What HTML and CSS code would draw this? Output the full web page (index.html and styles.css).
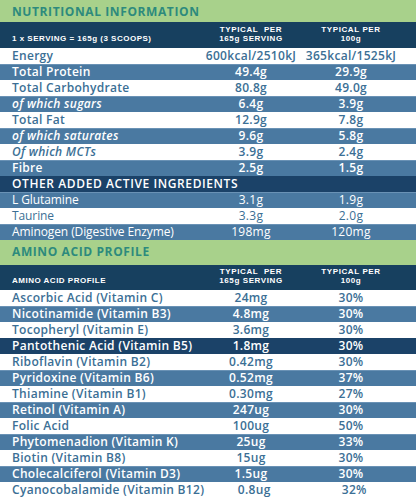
FILE: index.html
```html
<!DOCTYPE html>
<html>
<head>
<meta charset="utf-8">
<link rel="stylesheet" href="styles.css">
</head>
<body>
<div class="sheet">
  <div class="title">NUTRITIONAL INFORMATION</div>
  <div class="row head">
    <span class="lab">1 x SERVING = 165g (3 SCOOPS)</span>
    <span class="val">TYPICAL&nbsp; PER<br>165g SERVING</span>
    <span class="val">TYPICAL PER<br>100g</span>
  </div>
  <div class="row w"><span class="lab">Energy</span><span class="val">600kcal/2510kJ</span><span class="val">365kcal/1525kJ</span></div>
  <div class="row b"><span class="lab">Total Protein</span><span class="val">49.4g</span><span class="val">29.9g</span></div>
  <div class="row w"><span class="lab">Total Carbohydrate</span><span class="val">80.8g</span><span class="val">49.0g</span></div>
  <div class="row b"><span class="lab it">of which sugars</span><span class="val">6.4g</span><span class="val">3.9g</span></div>
  <div class="row w"><span class="lab">Total Fat</span><span class="val">12.9g</span><span class="val">7.8g</span></div>
  <div class="row b"><span class="lab it">of which saturates</span><span class="val">9.6g</span><span class="val">5.8g</span></div>
  <div class="row w"><span class="lab it">Of which MCTs</span><span class="val">3.9g</span><span class="val">2.4g</span></div>
  <div class="row b"><span class="lab">Fibre</span><span class="val">2.5g</span><span class="val">1.5g</span></div>
  <div class="row n"><span class="lab caps">OTHER ADDED ACTIVE INGREDIENTS</span></div>
  <div class="row b light"><span class="lab">L Glutamine</span><span class="val">3.1g</span><span class="val">1.9g</span></div>
  <div class="row w light"><span class="lab">Taurine</span><span class="val">3.3g</span><span class="val">2.0g</span></div>
  <div class="row b light"><span class="lab">Aminogen (Digestive Enzyme)</span><span class="val">198mg</span><span class="val">120mg</span></div>

  <div class="title t2">AMINO ACID PROFILE</div>
  <div class="row head h2">
    <span class="lab">AMINO ACID PROFILE</span>
    <span class="val">TYPICAL&nbsp; PER<br>165g SERVING</span>
    <span class="val">TYPICAL PER<br>100g</span>
  </div>
  <div class="row w am"><span class="lab">Ascorbic Acid (Vitamin C)</span><span class="val">24mg</span><span class="val">30%</span></div>
  <div class="row b am"><span class="lab">Nicotinamide (Vitamin B3)</span><span class="val">4.8mg</span><span class="val">30%</span></div>
  <div class="row w am"><span class="lab">Tocopheryl (Vitamin E)</span><span class="val">3.6mg</span><span class="val">30%</span></div>
  <div class="row n am"><span class="lab">Pantothenic Acid (Vitamin B5)</span><span class="val">1.8mg</span><span class="val">30%</span></div>
  <div class="row w am"><span class="lab">Riboflavin (Vitamin B2)</span><span class="val">0.42mg</span><span class="val">30%</span></div>
  <div class="row b am"><span class="lab">Pyridoxine (Vitamin B6)</span><span class="val">0.52mg</span><span class="val">37%</span></div>
  <div class="row w am"><span class="lab">Thiamine (Vitamin B1)</span><span class="val">0.30mg</span><span class="val">27%</span></div>
  <div class="row b am"><span class="lab">Retinol (Vitamin A)</span><span class="val">247ug</span><span class="val">30%</span></div>
  <div class="row w am"><span class="lab">Folic Acid</span><span class="val">100ug</span><span class="val">50%</span></div>
  <div class="row b am"><span class="lab">Phytomenadion (Vitamin K)</span><span class="val">25ug</span><span class="val">33%</span></div>
  <div class="row w am"><span class="lab">Biotin (Vitamin B8)</span><span class="val">15ug</span><span class="val">30%</span></div>
  <div class="row b am"><span class="lab">Cholecalciferol (Vitamin D3)</span><span class="val">1.5ug</span><span class="val">30%</span></div>
  <div class="row w am"><span class="lab">Cyanocobalamide (Vitamin B12)</span><span class="val">0.8ug</span><span class="val">32%</span></div>
</div>
</body>
</html>
```
FILE: styles.css
```css
html, body {
  margin: 0;
  padding: 0;
  background: #ffffff;
}
.sheet {
  width: 416px;
  font-family: "Open Sans", "DejaVu Sans", sans-serif;
  font-weight: 600;
  font-size: 12px;
  letter-spacing: 0.3px;
}
.title {
  height: 22px;
  background: #a8d18b;
  color: #2d8a7d;
  font-weight: 700;
  font-size: 12px;
  line-height: 12px;
  letter-spacing: 0.6px;
  padding: 0 12px 4px;
  display: flex;
  align-items: flex-end;
  box-sizing: border-box;
}
.title.t2 {
  height: 25px;
  padding-bottom: 7px;
}
.row {
  display: grid;
  grid-template-columns: 1fr 100px 100px;
  padding: 0 15px 0 12px;
  height: 16px;
  line-height: 16px;
  align-items: center;
  white-space: nowrap;
}
.val {
  text-align: center;
}
.w {
  background: #ffffff;
  color: #3b6f95;
}
.b {
  background: #4a79a1;
  color: #ffffff;
  box-shadow: inset 0 1px 0 #6a92b5;
}
.n {
  background: #1b4268;
  color: #ffffff;
}
.it {
  font-style: italic;
}
.caps {
  letter-spacing: 0.6px;
}
.light {
  font-weight: 400;
}
.light .lab {
  letter-spacing: -0.1px;
}
.head {
  height: 26px;
  background: #17405f;
  color: #ffffff;
  font-family: "Liberation Sans", Arial, sans-serif;
  font-size: 8px;
  font-weight: 700;
  letter-spacing: 0.6px;
  line-height: 9px;
  align-items: end;
  padding-bottom: 5px;
  box-sizing: border-box;
}
.head .lab {
  letter-spacing: 0.5px;
}
.head.h2 {
  height: 25px;
}
.am .val:first-of-type {
  padding-right: 6px;
}
```
